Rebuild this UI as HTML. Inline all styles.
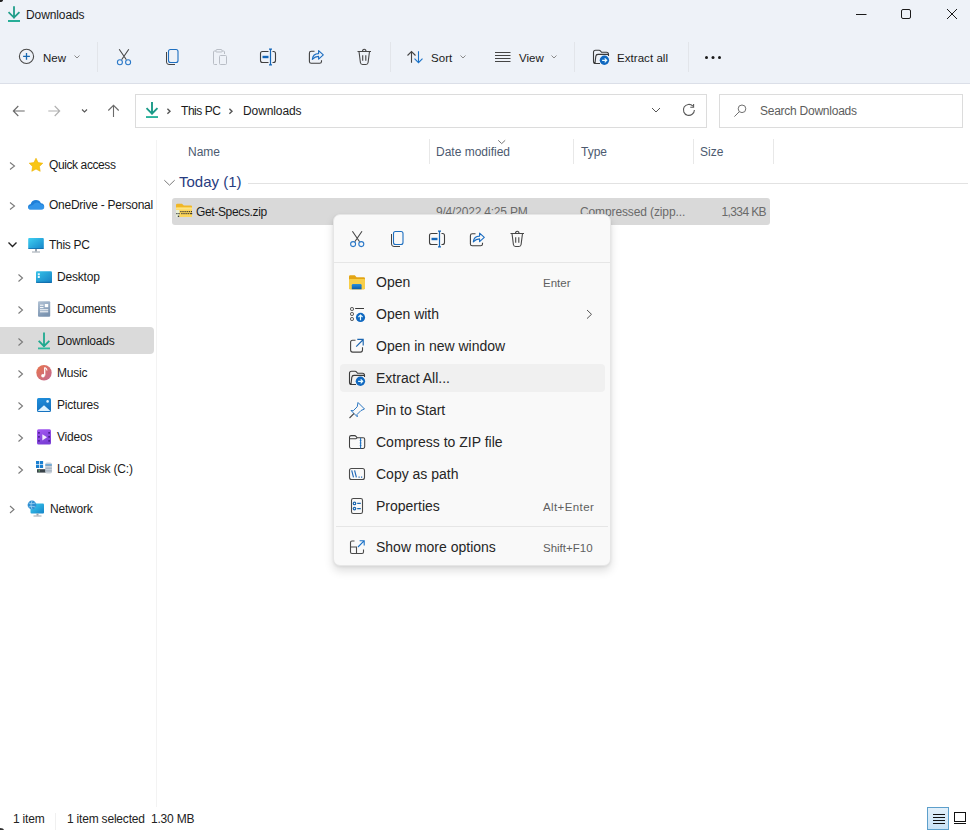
<!DOCTYPE html>
<html><head><meta charset="utf-8">
<style>
*{box-sizing:border-box;margin:0;padding:0}
html,body{width:970px;height:830px;overflow:hidden;background:#fff}
body{position:relative;font-family:"Liberation Sans",sans-serif;font-size:12px;color:#1b1b1b}
.a{position:absolute}
.t{position:absolute;white-space:nowrap;line-height:16px;letter-spacing:-0.2px}
svg{position:absolute;overflow:visible}
#top{left:0;top:0;width:970px;height:84px;background:#eef2f8}
#tbline{left:0;top:83px;width:970px;height:1px;background:#dbdfe8}
.sep{position:absolute;width:1px;background:#e2e5ea}
.box{position:absolute;border:1px solid #dcdcdc;background:#fff}
.side{color:#1b1b1b}
.tb{font-size:11.5px;letter-spacing:0.05px}
.ch{stroke:#7a7a7a;stroke-width:1.1;fill:none}
.hdr{color:#4c5a70}
.menu{left:333px;top:214px;width:278px;height:352px;background:#f9f9f9;border:1px solid #e6e6e6;border-radius:7px;box-shadow:0 5px 10px rgba(0,0,0,0.13),0 1px 3px rgba(0,0,0,0.07)}
.mi{position:absolute;white-space:nowrap;font-size:14px;line-height:18px;color:#262626;letter-spacing:0}
.sc{position:absolute;white-space:nowrap;font-size:11.5px;line-height:16px;color:#5f5f5f;letter-spacing:0}
</style></head><body>

<!-- title + toolbar background -->
<div id="top" class="a"></div>
<div id="tbline" class="a"></div>
<!-- window corners -->
<div class="a" style="left:-3px;top:-2px;width:6px;height:4px;border-radius:50%;background:#222"></div>

<!-- title -->
<svg style="left:0;top:0" width="30" height="30">
  <path d="M14 7.2V17.5M9.2 12.8L14 17.6L18.8 12.8" stroke="#1f9e8a" stroke-width="1.8" fill="none" stroke-linecap="square"/>
  <rect x="8" y="20" width="12" height="2" fill="#27ae98"/>
</svg>
<div class="t" style="left:26px;top:7px;letter-spacing:-0.1px">Downloads</div>

<!-- window controls -->
<svg style="left:850px;top:0" width="120" height="30">
  <path d="M6 14.5H16.5" stroke="#1a1a1a" stroke-width="1"/>
  <rect x="51.5" y="9.5" width="9" height="9" rx="1.5" stroke="#1a1a1a" stroke-width="1" fill="none"/>
  <path d="M97 9L107 19M107 9L97 19" stroke="#1a1a1a" stroke-width="1"/>
</svg>

<!-- toolbar -->
<svg style="left:0;top:0" width="970" height="84">
  <!-- new -->
  <circle cx="26.5" cy="56.4" r="7.1" stroke="#4a4a4a" stroke-width="1.1" fill="none"/>
  <path d="M26.5 53V59.8M23.1 56.4H29.9" stroke="#1666b0" stroke-width="1.3"/>
  <path d="M74.5 55.5L77 58L79.5 55.5" stroke="#8a8a8a" stroke-width="1" fill="none"/>
  <!-- cut -->
  <path d="M119.2 49.3L126.4 59.8M128.8 49.3L121.6 59.8" stroke="#464646" stroke-width="1.1" fill="none"/>
  <circle cx="119.9" cy="62.2" r="2.5" stroke="#2a78c8" stroke-width="1.1" fill="none"/>
  <circle cx="128.1" cy="62.2" r="2.5" stroke="#2a78c8" stroke-width="1.1" fill="none"/>
  <!-- copy -->
  <rect x="168.5" y="49.5" width="9.5" height="13" rx="2" stroke="#1e6fc0" stroke-width="1.1" fill="none"/>
  <path d="M166.5 52V62Q166.5 64.5 169 64.5H175" stroke="#444" stroke-width="1" fill="none"/>
  <!-- paste disabled -->
  <path d="M216 51H214.5Q213.5 51 213.5 52V63.5Q213.5 64.5 214.5 64.5H217M222 51H223.5Q224.5 51 224.5 52V54M216 50.5Q216 49.5 217 49.5H221Q222 49.5 222 50.5V51.5Q222 52 221.5 52H216.5Q216 52 216 51.5Z" stroke="#b9bec6" stroke-width="1" fill="none"/>
  <rect x="219.5" y="55.5" width="7" height="9" rx="1" stroke="#b9bec6" stroke-width="1" fill="none"/>
  <!-- rename -->
  <path d="M268.5 51.5H262.5Q260.5 51.5 260.5 53.5V60.5Q260.5 62.5 262.5 62.5H268.5M272.5 51.5H273.5Q275.5 51.5 275.5 53.5V60.5Q275.5 62.5 273.5 62.5H272.5" stroke="#3f3f3f" stroke-width="1.1" fill="none"/>
  <path d="M262.5 57H268.5" stroke="#1466b8" stroke-width="2.4"/>
  <path d="M270.5 49.2V64.8M269 49.2H272M269 64.8H272" stroke="#1466b8" stroke-width="1.2" fill="none"/>
  <!-- share -->
  <path d="M314.5 51.3H311.3Q309.4 51.3 309.4 53.2V61.4Q309.4 63.3 311.3 63.3H319.6Q321.5 63.3 321.5 61.4V60.2" stroke="#3f3f3f" stroke-width="1.1" fill="none"/>
  <path d="M312.3 59.3Q313 53.6 318.6 53.6V50.6L323.3 54.9L318.6 59.2V56.4Q315 56.4 312.3 59.3Z" stroke="#1a6cc0" stroke-width="1.1" fill="none" stroke-linejoin="round"/>
  <!-- delete -->
  <g transform="translate(0 0)"><path d="M357.5 51.5H371M362.5 51.5Q362.5 49.3 364.25 49.3Q366 49.3 366 51.5M359 51.5L360.4 62.5Q360.7 64.5 362.6 64.5H365.9Q367.8 64.5 368.1 62.5L369.5 51.5M362.7 55.3V60.7M365.8 55.3V60.7" stroke="#474747" stroke-width="1.1" fill="none"/></g>
  <!-- sort -->
  <path d="M411.5 51.5V62.7M407.5 55.5L411.5 51.5L415.5 55.5" stroke="#454545" stroke-width="1.1" fill="none"/>
  <path d="M418.5 51.2V62.6M414.5 58.6L418.5 62.6L422.5 58.6" stroke="#1a72c8" stroke-width="1.1" fill="none"/>
  <path d="M460.5 55.5L463 58L465.5 55.5" stroke="#8a8a8a" stroke-width="1" fill="none"/>
  <!-- view -->
  <path d="M495 52.5H510.5M495 55.5H510.5M495 58.5H510.5M495 61.5H510.5" stroke="#454545" stroke-width="1"/>
  <path d="M551.5 55.5L554 58L556.5 55.5" stroke="#8a8a8a" stroke-width="1" fill="none"/>
  <!-- extract -->
  <g transform="translate(244 -321)"><path d="M356 384.5H351.5Q349.5 384.5 349.5 382.5V373.3Q349.5 371.3 351.5 371.3H355Q356 371.3 356.8 372.3L357.5 373.3H362.5Q364.5 373.3 364.5 375.3V377M351 384L351.8 377.4Q352 375.4 354 375.4H364.3" stroke="#3a3a3a" stroke-width="1.1" fill="none"/>
  <circle cx="360.4" cy="381.3" r="4.7" fill="#1068c0"/>
  <path d="M358.1 381.3H362.6M360.7 379.3L362.7 381.3L360.7 383.3" stroke="#e8fbff" stroke-width="1.2" fill="none"/></g>
  <!-- more -->
  <circle cx="706.5" cy="57.5" r="1.5" fill="#1a1a1a"/>
  <circle cx="713" cy="57.5" r="1.5" fill="#1a1a1a"/>
  <circle cx="719.5" cy="57.5" r="1.5" fill="#1a1a1a"/>
</svg>
<div class="sep" style="left:97px;top:42px;height:30px"></div>
<div class="sep" style="left:390px;top:42px;height:30px"></div>
<div class="sep" style="left:574px;top:42px;height:30px"></div>
<div class="sep" style="left:688px;top:42px;height:30px"></div>
<div class="t tb" style="left:43px;top:50px">New</div>
<div class="t tb" style="left:431px;top:50px">Sort</div>
<div class="t tb" style="left:519px;top:50px">View</div>
<div class="t tb" style="left:617px;top:50px">Extract all</div>

<!-- address row -->
<svg style="left:0;top:84px" width="135" height="50">
  <path d="M13.3 27H24.7M18.3 22L13.3 27L18.3 32" stroke="#6a6a6a" stroke-width="1.1" fill="none"/>
  <path d="M48.3 27H59.7M54.7 22L59.7 27L54.7 32" stroke="#b0b0b0" stroke-width="1.1" fill="none"/>
  <path d="M82 25.5L84.5 28L87 25.5" stroke="#555" stroke-width="1.1" fill="none"/>
  <path d="M113.5 21.5V33M108.3 26.5L113.5 21.3L118.7 26.5" stroke="#6a6a6a" stroke-width="1.1" fill="none"/>
</svg>
<div class="box" style="left:135px;top:94px;width:572px;height:34px"></div>
<svg style="left:135px;top:94px" width="572" height="34">
  <path d="M17 9V19.5M12.2 14.8L17 19.6L21.8 14.8" stroke="#1b9a88" stroke-width="1.9" fill="none" stroke-linecap="square"/>
  <rect x="11" y="22.1" width="12" height="1.9" fill="#2bb39c"/>
  <path d="M32.4 14.7L35 17.2L32.4 19.7" stroke="#555" stroke-width="1.4" fill="none"/>
  <path d="M94.4 14.7L97 17.2L94.4 19.7" stroke="#555" stroke-width="1.4" fill="none"/>
  <path d="M517 14L521 18L525 14" stroke="#555" stroke-width="1" fill="none"/>
  <path d="M559.4 16A5.5 5.5 0 1 1 557.8 12M558.6 10V13.3H555.3" stroke="#5a5a5a" stroke-width="1.1" fill="none"/>
</svg>
<div class="t" style="left:181px;top:103px;letter-spacing:-0.45px">This PC</div>
<div class="t" style="left:243px;top:103px;letter-spacing:-0.1px">Downloads</div>
<div class="box" style="left:719px;top:94px;width:244px;height:34px"></div>
<svg style="left:719px;top:94px" width="100" height="34">
  <circle cx="23" cy="14.8" r="3.8" stroke="#707070" stroke-width="1" fill="none"/>
  <path d="M20.2 17.8L15.4 22.6" stroke="#707070" stroke-width="1"/>
</svg>
<div class="t" style="left:760px;top:103px;color:#5d5d5d;letter-spacing:-0.25px">Search Downloads</div>

<!-- sidebar divider -->
<div class="a" style="left:156px;top:140px;width:1px;height:667px;background:#f3f3f3"></div>

<!-- sidebar -->
<div class="a" style="left:0;top:327px;width:154px;height:27px;background:#dadada;border-radius:0 4px 4px 0"></div>
<svg style="left:0;top:135px" width="156" height="400">
  <!-- chevrons -->
  <path class="ch" d="M10 27.5L14.5 31L10 34.5"/>
  <path class="ch" d="M10 67.5L14.5 71L10 74.5"/>
  <path class="ch" d="M8.5 107.5L12.5 111.5L16.5 107.5" style="stroke:#222;stroke-width:1.35"/>
  <path class="ch" d="M18.5 139.5L22.5 143L18.5 146.5"/>
  <path class="ch" d="M18.5 171.5L22.5 175L18.5 178.5"/>
  <path class="ch" d="M18.5 203.5L22.5 207L18.5 210.5"/>
  <path class="ch" d="M18.5 235.5L22.5 239L18.5 242.5"/>
  <path class="ch" d="M18.5 267.5L22.5 271L18.5 274.5"/>
  <path class="ch" d="M18.5 299.5L22.5 303L18.5 306.5"/>
  <path class="ch" d="M18.5 331.5L22.5 335L18.5 338.5"/>
  <path class="ch" d="M10 371L14 374.5L10 378"/>
  <!-- star -->
  <path d="M36 23.2L38.1 27.6L42.8 28.2L39.4 31.5L40.2 36.3L36 34L31.8 36.3L32.6 31.5L29.2 28.2L33.9 27.6Z" fill="#f9c613" stroke="#ecb100" stroke-width="0.6" stroke-linejoin="round"/>
  <!-- onedrive cloud -->
  <path d="M30.5 74.6Q28 74.6 28 71.8Q28 69.4 30.7 69Q31.8 65 36 65Q39.6 65 40.9 68.3Q44.2 68.5 44.2 71.6Q44.2 74.6 41.2 74.6Z" fill="#1e7fd8"/>
  <path d="M33 70Q34.5 67 37.5 67.5Q40 68 40.9 69.5Q44 69.5 44.2 72.5Q44.2 74.6 41.2 74.6H30.5Q28.3 74.6 28.2 72.5Q29.5 70 33 70Z" fill="#3a9cf0" opacity="0.7"/>
  <!-- this pc -->
  <rect x="28.2" y="103" width="15.6" height="11" rx="1" fill="url(#pcg)"/>
  <rect x="28.2" y="113" width="15.6" height="1" fill="#0d5f9e" opacity="0.6"/>
  <rect x="35" y="114" width="2" height="2.5" fill="#9aa3ad"/>
  <rect x="32" y="116.5" width="8" height="1" fill="#9aa3ad"/>
  <!-- desktop -->
  <defs>
    <linearGradient id="dg" x1="0" y1="0" x2="1" y2="1"><stop offset="0" stop-color="#34c2e8"/><stop offset="1" stop-color="#1580c4"/></linearGradient>
    <linearGradient id="docg" x1="0" y1="0" x2="0.4" y2="1"><stop offset="0" stop-color="#b3c3d5"/><stop offset="1" stop-color="#7a93b0"/></linearGradient>
    <linearGradient id="pcg" x1="0" y1="0" x2="1" y2="1"><stop offset="0" stop-color="#3fd0f2"/><stop offset="1" stop-color="#1483c8"/></linearGradient>
  </defs>
  <rect x="36" y="136.3" width="16" height="11.6" rx="1.2" fill="url(#dg)"/>
  <rect x="36" y="146.8" width="16" height="1.1" fill="#0d5f9e" opacity="0.7"/>
  <rect x="37.8" y="138.3" width="2" height="2" fill="#fff" opacity="0.9"/>
  <rect x="37.8" y="141" width="2" height="2" fill="#fff" opacity="0.9"/>
  <!-- documents -->
  <rect x="38" y="166.3" width="12.2" height="15.4" rx="1" fill="url(#docg)"/>
  <path d="M40 170.2H43.5M40 172.6H43.5M40 174.8H48.2M40 176.8H48.2" stroke="#fff" stroke-width="1" fill="none"/>
  <rect x="44.8" y="169" width="3.4" height="3.2" fill="#fff"/>
  <!-- downloads -->
  <path d="M44 198.5V211M39.3 206.5L44 211.2L48.7 206.5" stroke="#1fa98f" stroke-width="1.8" fill="none" stroke-linecap="square"/>
  <rect x="38" y="212.5" width="12" height="1.8" fill="#2fb99e"/>
  <!-- music -->
  <defs><linearGradient id="mg" x1="0" y1="0" x2="1" y2="1"><stop offset="0" stop-color="#e8744a"/><stop offset="1" stop-color="#c36a96"/></linearGradient></defs>
  <circle cx="44" cy="237.7" r="7.7" fill="url(#mg)"/>
  <path d="M44.7 232.5V240.5" stroke="#fff" stroke-width="1.3"/>
  <circle cx="43" cy="240.8" r="1.8" fill="#fff"/>
  <path d="M44.7 232.5Q47 233.5 47 235.5" stroke="#fff" stroke-width="1.1" fill="none"/>
  <!-- pictures -->
  <defs>
    <linearGradient id="picg" x1="0" y1="0" x2="0.3" y2="1"><stop offset="0" stop-color="#1f8fdc"/><stop offset="1" stop-color="#1572c0"/></linearGradient>
    <linearGradient id="vidg" x1="0" y1="0" x2="0.3" y2="1"><stop offset="0" stop-color="#a458f2"/><stop offset="1" stop-color="#7b3fd6"/></linearGradient>
  </defs>
  <rect x="37" y="263" width="14" height="14" rx="1.5" fill="url(#picg)"/>
  <path d="M37.6 276L44 270.2L50.4 276Z" fill="#dcf2ff"/>
  <circle cx="47.6" cy="266.4" r="1.3" fill="#dcf2ff"/>
  <!-- videos -->
  <rect x="37" y="294.2" width="14" height="15.4" rx="1.5" fill="url(#vidg)"/>
  <path d="M42.3 299.2V305.4L47 302.3Z" fill="#f4eaff"/>
  <rect x="38.1" y="297" width="1.7" height="1.7" fill="#4b1f8f"/>
  <rect x="38.1" y="301" width="1.7" height="1.7" fill="#4b1f8f"/>
  <rect x="38.1" y="305" width="1.7" height="1.7" fill="#4b1f8f"/>
  <rect x="48.3" y="297" width="1.7" height="1.7" fill="#4b1f8f"/>
  <rect x="48.3" y="301" width="1.7" height="1.7" fill="#4b1f8f"/>
  <rect x="48.3" y="305" width="1.7" height="1.7" fill="#4b1f8f"/>
  <!-- local disk -->
  <rect x="36" y="326" width="3.2" height="3.2" fill="#1a7fd0"/>
  <rect x="39.9" y="326" width="3.2" height="3.2" fill="#1a7fd0"/>
  <rect x="36" y="329.8" width="3.2" height="3.2" fill="#1a7fd0"/>
  <rect x="39.9" y="329.8" width="3.2" height="3.2" fill="#1a7fd0"/>
  <rect x="37" y="334.2" width="9.5" height="3.4" fill="#39434a"/>
  <rect x="38.6" y="335.3" width="1.2" height="1.2" fill="#7fd27f"/>
  <rect x="45.2" y="327.5" width="6.8" height="11" rx="1.8" fill="#c9d1da"/>
  <path d="M45.4 330.5H51.8M45.4 333.2H51.8M45.4 335.9H51.8" stroke="#8fa0b2" stroke-width="0.8"/>
  <path d="M45.4 329.8H51.8" stroke="#3b9be0" stroke-width="0.9"/>
  <!-- network -->
  <rect x="30.5" y="368.5" width="13.5" height="10" rx="1" fill="url(#pcg)"/>
  <rect x="36.5" y="378.5" width="2" height="2" fill="#9aa3ad"/>
  <rect x="33.5" y="380.5" width="8" height="1" fill="#9aa3ad"/>
  <circle cx="32" cy="370" r="4.4" fill="#2f8fd2"/>
  <path d="M28.5 368Q32 369.5 35.5 368M28.5 372Q32 370.5 35.5 372M32 365.7Q29.8 370 32 374.3" stroke="#9fd3f2" stroke-width="0.8" fill="none"/>
</svg>
<div class="t side" style="left:49px;top:157px;letter-spacing:-0.4px">Quick access</div>
<div class="t side" style="left:49px;top:197px;letter-spacing:-0.25px">OneDrive - Personal</div>
<div class="t side" style="left:49px;top:237px;letter-spacing:-0.3px">This PC</div>
<div class="t side" style="left:57px;top:269px">Desktop</div>
<div class="t side" style="left:57px;top:301px">Documents</div>
<div class="t side" style="left:57px;top:333px">Downloads</div>
<div class="t side" style="left:57px;top:365px">Music</div>
<div class="t side" style="left:57px;top:397px">Pictures</div>
<div class="t side" style="left:57px;top:429px">Videos</div>
<div class="t side" style="left:57px;top:461px">Local Disk (C:)</div>
<div class="t side" style="left:50px;top:501px">Network</div>

<!-- content header -->
<div class="sep" style="left:429px;top:139px;height:25px;background:#e8e8e8"></div>
<div class="sep" style="left:573px;top:139px;height:25px;background:#e8e8e8"></div>
<div class="sep" style="left:693px;top:139px;height:25px;background:#e8e8e8"></div>
<div class="sep" style="left:773px;top:139px;height:25px;background:#e8e8e8"></div>
<div class="t hdr" style="left:188px;top:144px;letter-spacing:0">Name</div>
<div class="t hdr" style="left:436px;top:144px;letter-spacing:0">Date modified</div>
<div class="t hdr" style="left:581px;top:144px;letter-spacing:0">Type</div>
<div class="t hdr" style="left:700px;top:144px;letter-spacing:0">Size</div>
<svg style="left:0;top:0" width="970" height="230">
  <path d="M498.2 140.3L501.7 143.6L505.2 140.3" stroke="#777" stroke-width="1" fill="none"/>
  <path d="M164.3 180.2L169.5 185.2L174.7 180.2" stroke="#7a7a7a" stroke-width="1" fill="none"/>
  <path d="M248 183.5H968" stroke="#e2e2e2" stroke-width="1"/>
</svg>
<div class="t" style="left:179px;top:172px;font-size:15px;line-height:20px;color:#283c80;letter-spacing:0">Today (1)</div>

<!-- file row -->
<div class="a" style="left:172px;top:198px;width:598px;height:27px;background:#d9d9d9;border-radius:3px"></div>
<svg style="left:0;top:0" width="200" height="230">
  <path d="M176 205Q176 203.7 177.3 203.7H182L183.8 205.5H191Q192 205.5 192 206.5V216Q192 217 191 217H177Q176 217 176 216Z" fill="#f0b626"/>
  <rect x="176" y="207" width="16" height="10" rx="0.6" fill="#fcd55a"/>
  <rect x="176" y="208" width="16" height="1.5" fill="#fde690" opacity="0.8"/>
  <rect x="176" y="210" width="3.3" height="7" fill="#e7efd6"/>
  <rect x="180.3" y="211" width="1.2" height="1.2" fill="#333"/><rect x="182.4" y="211" width="1.2" height="1.2" fill="#333"/><rect x="184.5" y="211" width="1.2" height="1.2" fill="#333"/><rect x="186.6" y="211" width="1.2" height="1.2" fill="#333"/><rect x="188.7" y="211" width="1.2" height="1.2" fill="#333"/><rect x="190.8" y="211" width="1.2" height="1.2" fill="#333"/>
  <rect x="176.3" y="213" width="1.2" height="1.2" fill="#333"/><rect x="178.4" y="213" width="1.2" height="1.2" fill="#333"/><rect x="181.3" y="213" width="1.2" height="1.2" fill="#333"/><rect x="183.4" y="213" width="1.2" height="1.2" fill="#333"/><rect x="185.5" y="213" width="1.2" height="1.2" fill="#333"/><rect x="187.6" y="213" width="1.2" height="1.2" fill="#333"/><rect x="189.7" y="213" width="1.2" height="1.2" fill="#333"/><rect x="191" y="213" width="1.2" height="1.2" fill="#333"/>
  <rect x="177.8" y="215.6" width="1.4" height="1.4" fill="#333"/>
</svg>
<div class="t" style="left:196px;top:204px;letter-spacing:-0.35px">Get-Specs.zip</div>
<div class="t" style="left:436px;top:204px;color:#6a6a6a;letter-spacing:-0.2px">9/4/2022 4:25 PM</div>
<div class="t" style="left:580px;top:204px;color:#6a6a6a;letter-spacing:-0.12px">Compressed (zipp...</div>
<div class="t" style="left:706px;top:204px;width:60px;text-align:right;color:#6a6a6a;letter-spacing:-0.6px">1,334 KB</div>

<!-- context menu -->
<div class="a menu"></div>
<div class="a" style="left:334px;top:262px;width:276px;height:1px;background:#e6e6e6"></div>
<div class="a" style="left:340px;top:364px;width:265px;height:28px;background:#f0f0f0;border-radius:4px"></div>
<div class="a" style="left:336px;top:526px;width:272px;height:1px;background:#e6e6e6"></div>
<svg style="left:0;top:0" width="620" height="570">
  <!-- cut -->
  <path d="M352.4 231.2L359.6 241.7M362 231.2L354.8 241.7" stroke="#464646" stroke-width="1.1" fill="none"/>
  <circle cx="353.1" cy="244.1" r="2.5" stroke="#2a78c8" stroke-width="1.1" fill="none"/>
  <circle cx="361.3" cy="244.1" r="2.5" stroke="#2a78c8" stroke-width="1.1" fill="none"/>
  <!-- copy -->
  <rect x="393.5" y="231.5" width="9.5" height="13" rx="2" stroke="#1e6fc0" stroke-width="1.1" fill="none"/>
  <path d="M391.5 234V244Q391.5 246.5 394 246.5H400" stroke="#444" stroke-width="1" fill="none"/>
  <!-- rename -->
  <path d="M437.5 233.5H431.5Q429.5 233.5 429.5 235.5V242.5Q429.5 244.5 431.5 244.5H437.5M441.5 233.5H442.5Q444.5 233.5 444.5 235.5V242.5Q444.5 244.5 442.5 244.5H441.5" stroke="#3f3f3f" stroke-width="1.1" fill="none"/>
  <path d="M431.5 239H437.5" stroke="#1466b8" stroke-width="2.4"/>
  <path d="M439.5 231.2V246.8M438 231.2H441M438 246.8H441" stroke="#1466b8" stroke-width="1.2" fill="none"/>
  <!-- share -->
  <g transform="translate(161 182.5)">  <path d="M314.5 51.3H311.3Q309.4 51.3 309.4 53.2V61.4Q309.4 63.3 311.3 63.3H319.6Q321.5 63.3 321.5 61.4V60.2" stroke="#3f3f3f" stroke-width="1.1" fill="none"/>
    <path d="M312.3 59.3Q313 53.6 318.6 53.6V50.6L323.3 54.9L318.6 59.2V56.4Q315 56.4 312.3 59.3Z" stroke="#1a6cc0" stroke-width="1.1" fill="none" stroke-linejoin="round"/></g>
  <!-- delete -->
  <g transform="translate(153 182)"><path d="M357.5 51.5H371M362.5 51.5Q362.5 49.3 364.25 49.3Q366 49.3 366 51.5M359 51.5L360.4 62.5Q360.7 64.5 362.6 64.5H365.9Q367.8 64.5 368.1 62.5L369.5 51.5M362.7 55.3V60.7M365.8 55.3V60.7" stroke="#474747" stroke-width="1.1" fill="none"/></g>

  <!-- open folder -->
  <path d="M349 276.5Q349 275.3 350.2 275.3H354.8L356.6 277.2H363.8Q365 277.2 365 278.4V288Q365 289.2 363.8 289.2H350.2Q349 289.2 349 288Z" fill="#e3a514"/>
  <rect x="349" y="279" width="16" height="10.2" rx="1" fill="#f8cf4a"/>
  <defs><linearGradient id="ofg" x1="0" y1="0" x2="0" y2="1"><stop offset="0" stop-color="#2a90dc"/><stop offset="1" stop-color="#0c5aa6"/></linearGradient></defs>
  <path d="M351.8 289.2V285.2Q351.8 284 353 284H360.4Q361.6 284 361.6 285.2V289.2Z" fill="url(#ofg)"/>
  <!-- open with -->
  <rect x="350.6" y="307.6" width="2.8" height="2.8" rx="0.8" stroke="#3a3a3a" stroke-width="1" fill="none"/>
  <rect x="350.6" y="312.6" width="2.8" height="2.8" rx="0.8" stroke="#3a3a3a" stroke-width="1" fill="none"/>
  <rect x="350.6" y="317.6" width="2.8" height="2.8" rx="0.8" stroke="#3a3a3a" stroke-width="1" fill="none"/>
  <path d="M355.2 308.5H364" stroke="#3a3a3a" stroke-width="1"/>
  <circle cx="360.5" cy="317.4" r="4.6" fill="#1068c0"/>
  <path d="M360.5 320.2V315M358.4 317.1L360.5 315L362.6 317.1" stroke="#e8fbff" stroke-width="1.2" fill="none"/>
  <!-- open new window -->
  <path d="M355.5 340.3H352.6Q350.6 340.3 350.6 342.3V350.1Q350.6 352.1 352.6 352.1H360.5Q362.5 352.1 362.5 350.1V347.3" stroke="#444" stroke-width="1.1" fill="none"/>
  <path d="M356.2 346.6L362.8 340M357.3 339.4H363.2V345.6" stroke="#1b65b0" stroke-width="1.15" fill="none"/>
  <!-- extract -->
  <path d="M356 384.5H351.5Q349.5 384.5 349.5 382.5V373.3Q349.5 371.3 351.5 371.3H355Q356 371.3 356.8 372.3L357.5 373.3H362.5Q364.5 373.3 364.5 375.3V377M351 384L351.8 377.4Q352 375.4 354 375.4H364.3" stroke="#3a3a3a" stroke-width="1.1" fill="none"/>
  <circle cx="360.4" cy="381.3" r="4.7" fill="#1068c0"/>
  <path d="M358.1 381.3H362.6M360.7 379.3L362.7 381.3L360.7 383.3" stroke="#e8fbff" stroke-width="1.2" fill="none"/>
  <!-- pin -->
  <path d="M358 402.5L364.5 409L361 410.5L357 414.5L357.3 416.8L351 410.5L353.2 410.8L357.2 406.8Z" stroke="#2a76c2" stroke-width="1" fill="none" stroke-linejoin="round"/>
  <path d="M354 413.5L349.5 418" stroke="#4a4a4a" stroke-width="1.1"/>
  <!-- compress -->
  <path d="M349.5 437.3Q349.5 435.6 351.2 435.6H354.6Q355.4 435.6 356 436.3L357.2 437.8H363.2Q364.7 437.8 364.7 439.3V446.8Q364.7 448.4 363.2 448.4H351.1Q349.5 448.4 349.5 446.8Z M349.5 438.8H355.2Q355.9 438.8 356.4 438.3L357.2 437.8" stroke="#3f3f3f" stroke-width="1.05" fill="none"/>
  <path d="M360.6 438V448.4M359.8 440.5H361.4M359.8 443H361.4M359.8 445.5H361.4" stroke="#1b6fc0" stroke-width="1.05" fill="none"/>
  <!-- copy as path -->
  <rect x="349.5" y="468.5" width="15" height="11" rx="2" stroke="#4a4a4a" stroke-width="1.1" fill="none"/>
  <path d="M351.7 470.3L353.5 477.4M354.6 470.3L356.4 477.4" stroke="#2068b8" stroke-width="1.15"/>
  <path d="M358.5 477.1H359.7M361 477.1H362.2" stroke="#2068b8" stroke-width="1.3"/>
  <!-- properties -->
  <rect x="351.5" y="498.5" width="11" height="15" rx="1.8" stroke="#4a4a4a" stroke-width="1.1" fill="none"/>
  <circle cx="354.5" cy="503.4" r="1.25" stroke="#1d68b0" stroke-width="1.2" fill="none"/>
  <circle cx="354.5" cy="508.6" r="1.25" stroke="#1d68b0" stroke-width="1.2" fill="none"/>
  <path d="M357.2 503.4H360.8M357.2 508.6H360.8" stroke="#1d68b0" stroke-width="1.2"/>
  <!-- show more -->
  <path d="M354.5 541H352Q350.5 541 350.5 542.5V552Q350.5 553.5 352 553.5H362Q363.5 553.5 363.5 552V549.5M350.5 547H356.5V553.5" stroke="#4a4a4a" stroke-width="1.1" fill="none"/>
  <path d="M358 547L363.8 541.2M359.6 540.8H364.2V545.4" stroke="#1a72c8" stroke-width="1.1" fill="none"/>
  <!-- submenu chevron -->
  <path d="M587 310L591.5 314.3L587 318.6" stroke="#555" stroke-width="1" fill="none"/>
</svg>
<div class="mi" style="left:376px;top:273px">Open</div>
<div class="mi" style="left:376px;top:305px">Open with</div>
<div class="mi" style="left:376px;top:337px">Open in new window</div>
<div class="mi" style="left:376px;top:369px">Extract All...</div>
<div class="mi" style="left:376px;top:401px">Pin to Start</div>
<div class="mi" style="left:376px;top:433px">Compress to ZIP file</div>
<div class="mi" style="left:376px;top:465px">Copy as path</div>
<div class="mi" style="left:376px;top:497px">Properties</div>
<div class="mi" style="left:376px;top:538px">Show more options</div>
<div class="sc" style="left:543px;top:275px">Enter</div>
<div class="sc" style="left:543px;top:499px;letter-spacing:0.4px">Alt+Enter</div>
<div class="sc" style="left:543px;top:540px">Shift+F10</div>

<!-- status bar -->
<div class="t" style="left:13px;top:811px;color:#222">1 item</div>
<div class="a" style="left:55px;top:813px;width:1px;height:17px;background:#f0f0f0"></div>
<div class="t" style="left:67px;top:811px;color:#222">1 item selected</div>
<div class="t" style="left:151px;top:811px;color:#222">1.30 MB</div>
<div class="a" style="left:927px;top:807px;width:22px;height:23px;background:linear-gradient(#e3f0fa,#c9e2f5);border:1px solid #5d9fcb"></div>
<svg style="left:0;top:0" width="970" height="830">
  <path d="M933 814.5H945M933 817.5H945M933 820.5H945M933 823.5H945" stroke="#111" stroke-width="1"/>
  <rect x="954.5" y="812.5" width="11" height="9" stroke="#111" stroke-width="1" fill="none"/>
  <path d="M954 823.5H966" stroke="#111" stroke-width="1"/>
</svg>
<div class="a" style="left:-4px;top:827.5px;width:8px;height:5px;border-radius:50%;background:#333"></div>
</body></html>
